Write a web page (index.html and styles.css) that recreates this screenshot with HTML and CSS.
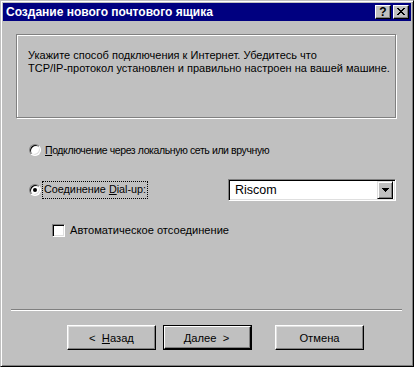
FILE: index.html
```html
<!DOCTYPE html>
<html>
<head>
<meta charset="utf-8">
<link rel="stylesheet" href="styles.css">
</head>
<body>
<div class="window">
  <div class="titlebar">
    <span class="title">Создание нового почтового ящика</span>
    <div class="tbtns">
      <span class="tbtn q">?</span>
      <span class="tbtn x"><svg width="8" height="7" viewBox="0 0 8 7"><path d="M0 0h2v1h1v1h2V1h1V0h2v1H7v1H6v1H5v1h1v1h1v1h1v1H6V6H5V5H3v1H2v1H0V6h1V5h1V4h1V3H2V2H1V1H0z" fill="#000"/></svg></span>
    </div>
  </div>
  <div class="content">
    <div class="info">
      <p>Укажите способ подключения к Интернет. Убедитесь что<br>TCP/IP-протокол установлен и правильно настроен на вашей машине.</p>
    </div>
    <div class="options">
      <div class="row row1">
        <span class="radio"></span>
        <span class="label l1"><u>П</u>одключение через локальную сеть или вручную</span>
      </div>
      <div class="row row2">
        <span class="radio checked"></span>
        <span class="label focus">Соединение <u>D</u>ial-up:</span>
        <div class="combo">
          <span class="combo-text">Riscom</span>
          <span class="combo-btn"><svg width="7" height="4" viewBox="0 0 7 4"><path d="M0 0h7v1H6v1H5v1H4v1H3V3H2V2H1V1H0z" fill="#000"/></svg></span>
        </div>
      </div>
      <div class="row row3">
        <span class="check"></span>
        <span class="label l3">Автоматическое отсоединение</span>
      </div>
    </div>
    <div class="sep"></div>
    <div class="buttons">
      <div class="btn">&lt;&nbsp;&nbsp;<u>Н</u>азад</div>
      <div class="btn default"><span><u>Д</u>алее&nbsp;&nbsp;&gt;</span></div>
      <div class="btn cancel">Отмена</div>
    </div>
  </div>
</div>
</body>
</html>
```
FILE: styles.css
```css
* { box-sizing: border-box; }
html, body { margin: 0; padding: 0; }
body {
  background: #c0c0c0;
  font-family: "Liberation Sans", Arial, sans-serif;
  font-size: 11px;
  color: #000;
}
.window {
  width: 414px;
  height: 367px;
  background: #c0c0c0;
  border: 1px solid;
  border-color: #c0c0c0 #000 #000 #c0c0c0;
  box-shadow: inset 1px 1px 0 #fff, inset -1px -1px 0 #808080;
  padding: 2px;
  display: flex;
  flex-direction: column;
}
.titlebar {
  height: 18px;
  background: #000080;
  display: flex;
  align-items: center;
  justify-content: space-between;
  padding: 0 2px 0 3px;
}
.title {
  color: #fff;
  font-weight: bold;
  font-size: 12px;
  white-space: nowrap;
}
.tbtns { display: flex; gap: 2px; }
.tbtn {
  width: 16px;
  height: 14px;
  background: #c0c0c0;
  border: 1px solid;
  border-color: #fff #000 #000 #fff;
  box-shadow: inset -1px -1px 0 #808080;
  display: flex;
  align-items: center;
  justify-content: center;
}
.tbtn.q {
  font-weight: bold;
  font-size: 12px;
  line-height: 12px;
  padding-bottom: 1px;
}
.tbtn.x svg { display: block; margin-bottom: 1px; }
.content {
  flex: 1;
  display: flex;
  flex-direction: column;
}
.info {
  margin: 13px 0 0 13px;
  width: 380px;
  height: 84px;
  border: 1px solid #808080;
  box-shadow: inset 1px 1px 0 #fff, 1px 1px 0 #fff;
  padding: 14px 0 0 11px;
}
.info p {
  margin: 0;
  line-height: 13px;
  font-size: 11px;
  white-space: nowrap;
}
.options {
  margin-top: 21px;
  display: flex;
  flex-direction: column;
  gap: 18px;
}
.row {
  height: 22px;
  display: flex;
  align-items: center;
}
.row1, .row2 { padding-left: 26px; }
.row3 { padding-left: 49px; }
.radio {
  width: 12px;
  height: 12px;
  border-radius: 50%;
  background: #fff;
  border: 1px solid;
  border-color: #808080 #fff #fff #808080;
  box-shadow: inset 1px 1px 0 #000, inset -1px -1px 0 #dfdfdf;
  position: relative;
  flex: none;
}
.radio.checked::after {
  content: "";
  position: absolute;
  left: 3px;
  top: 3px;
  width: 4px;
  height: 4px;
  border-radius: 50%;
  background: #000;
}
.label {
  margin-left: 4px;
  font-size: 10.5px;
  white-space: nowrap;
}
.label.l1 { letter-spacing: -0.4px; }
.label.focus {
  margin-left: 2px;
  padding: 1px 1px 2px 1px;
  outline: 1px dotted #000;
  height: 16px;
  line-height: 13px;
  font-size: 10.8px;
}
.combo {
  margin-left: auto;
  margin-right: 15px;
  width: 168px;
  height: 22px;
  background: #fff;
  border: 1px solid;
  border-color: #808080 #fff #fff #808080;
  box-shadow: inset 1px 1px 0 #000, inset -1px -1px 0 #dfdfdf;
  display: flex;
  align-items: center;
  justify-content: space-between;
  padding: 2px;
}
.combo-text {
  font-size: 12.5px;
  padding-left: 4px;
}
.combo-btn {
  width: 16px;
  height: 18px;
  background: #c0c0c0;
  border: 1px solid;
  border-color: #dfdfdf #000 #000 #dfdfdf;
  box-shadow: inset 1px 1px 0 #fff, inset -1px -1px 0 #808080;
  display: flex;
  align-items: center;
  justify-content: center;
}
.combo-btn svg { display: block; }
.check {
  width: 13px;
  height: 13px;
  background: #fff;
  border: 1px solid;
  border-color: #808080 #fff #fff #808080;
  box-shadow: inset 1px 1px 0 #000, inset -1px -1px 0 #dfdfdf;
  flex: none;
}
.label.l3 {
  margin-left: 5px;
  font-size: 11.1px;
}
.sep {
  margin: 68px 0 0 8px;
  width: 391px;
  height: 2px;
  border-top: 1px solid #808080;
  border-bottom: 1px solid #fff;
}
.buttons {
  margin: 14px 0 0 64px;
  display: flex;
}
.btn {
  width: 89px;
  height: 25px;
  background: #c0c0c0;
  border: 1px solid;
  border-color: #fff #000 #000 #fff;
  box-shadow: inset -1px -1px 0 #808080, inset 1px 1px 0 #dfdfdf;
  display: flex;
  align-items: center;
  justify-content: center;
  font-size: 11.2px;
  white-space: nowrap;
}
.btn.default {
  margin-left: 7px;
  border: 1px solid #000;
  box-shadow: none;
  padding: 0;
}
.btn.default span {
  width: 100%;
  height: 100%;
  border: 1px solid;
  border-color: #fff #000 #000 #fff;
  box-shadow: inset -1px -1px 0 #808080;
  display: flex;
  align-items: center;
  justify-content: center;
  padding-right: 2px;
}
.btn.cancel { margin-left: 23px; }
```
